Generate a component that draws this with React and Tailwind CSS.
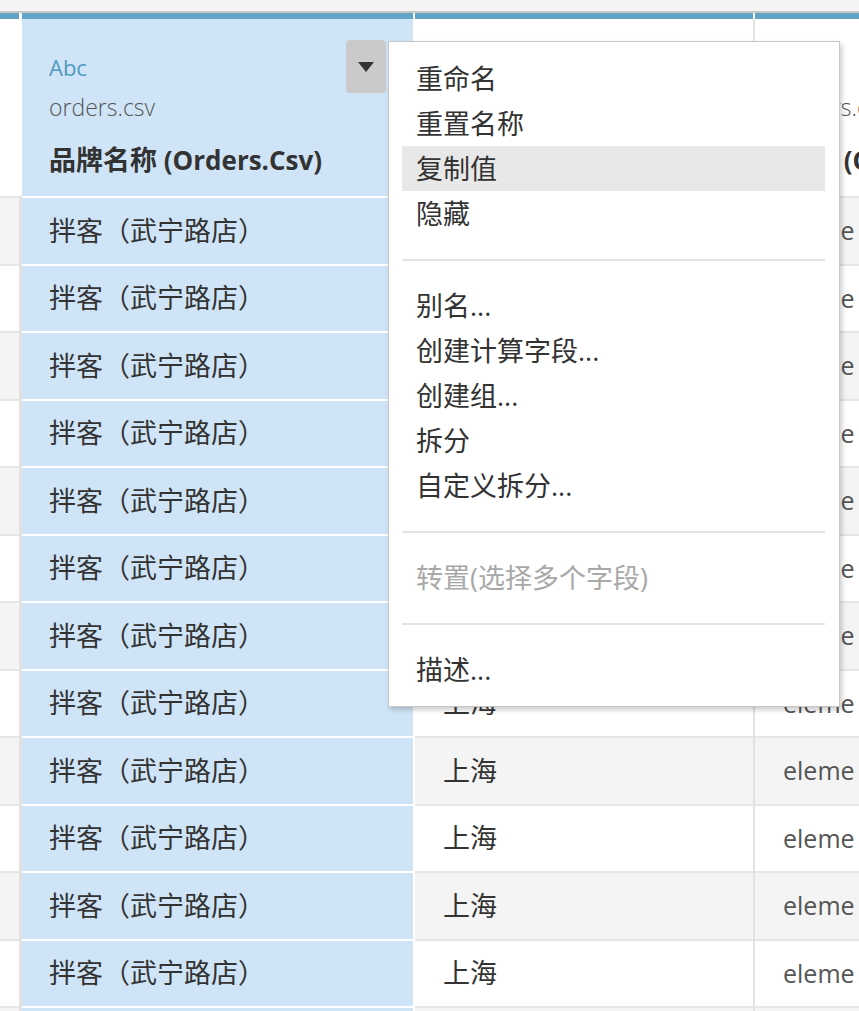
import React from 'react';

const font = { fontFamily: '"Open Sans", "Noto Sans CJK SC", sans-serif' };

const rows = Array.from({ length: 13 }, (_, i) => i);

const menuGroups = [
  [
    { label: '重命名' },
    { label: '重置名称' },
    { label: '复制值', active: true },
    { label: '隐藏' },
  ],
  [
    { label: '别名...' },
    { label: '创建计算字段...' },
    { label: '创建组...' },
    { label: '拆分' },
    { label: '自定义拆分...' },
  ],
  [{ label: '转置(选择多个字段)', disabled: true }],
  [{ label: '描述...' }],
];

const HeaderText = ({ title }) => (
  <div className="pt-[28px] whitespace-nowrap">
    <div className="h-10 leading-10 text-[22px] font-medium text-[#4e9bc0]">Abc</div>
    <div className="h-10 leading-10 text-[23px] font-light text-[#555]">orders.csv</div>
    <div className="mt-[13px] h-10 leading-10 font-bold text-[#333]">
      <span className="text-[27px]">{title}</span>
      <span className="text-[26px]"> (Orders.Csv)</span>
    </div>
  </div>
);

const Divider = ({ color, width }) => (
  <div className={`flex flex-col shrink-0 ${width}`}>
    <div className="h-[6px] bg-white" />
    <div className={`flex-1 ${color}`} />
  </div>
);

const Column = ({ width, selected, header, cell }) => (
  <div className={`flex flex-col shrink-0 ${width}`}>
    <div className="h-[6px] bg-[#62a4c8]" />
    <div className={`relative h-[177px] ${selected ? 'bg-[#cfe5f7] px-[27px]' : 'bg-white px-[28px]'}`}>
      {header}
    </div>
    {rows.map((i) => (
      <div
        key={i}
        className={`h-[67.5px] border-t-2 flex items-center overflow-hidden whitespace-nowrap ${
          selected
            ? 'bg-[#cfe5f7] border-white px-[27px]'
            : i % 2 === 0
            ? 'bg-[#f4f4f4] border-[#e6e6e6] px-[28px]'
            : 'bg-white border-[#e6e6e6] px-[28px]'
        }`}
      >
        {cell}
      </div>
    ))}
  </div>
);

export default function App() {
  return (
    <div className="relative w-[859px] h-[1011px] overflow-hidden bg-white" style={font}>
      <div className="h-[11px] bg-[#f4f4f4]" />
      <div className="h-[2px] bg-[#c8c8c8]" />
      <div className="flex">
        <Column width="w-[19px]" cell={null} />
        <Divider color="bg-[#e2e2e2]" width="w-[3px]" />
        <Column
          width="w-[391px]"
          selected
          header={
            <>
              <HeaderText title="品牌名称" />
              <button className="absolute right-[27px] top-[21px] w-10 h-[53px] rounded bg-[#cacaca] flex items-center justify-center">
                <svg width="16" height="10" viewBox="0 0 16 10">
                  <path d="M0 0h16L8 10z" fill="#333" />
                </svg>
              </button>
            </>
          }
          cell={<span className="text-[27px] text-[#333]">拌客（武宁路店）</span>}
        />
        <div className="w-[2px] shrink-0 bg-white" />
        <Column
          width="w-[338px]"
          header={<HeaderText title="城市" />}
          cell={<span className="text-[27px] text-[#333]">上海</span>}
        />
        <Divider color="bg-[#e2e2e2]" width="w-[2px]" />
        <Column
          width="w-[200px]"
          header={<HeaderText title="平台" />}
          cell={<span className="text-[25px] text-[#555]">eleme</span>}
        />
      </div>

      <div className="absolute left-[388px] top-[41px] w-[452px] bg-white border border-[#c6c6c6] shadow-[2px_3px_5px_rgba(0,0,0,0.2)] pt-[14px] pb-[14px] pl-[13px] pr-[14px]">
        {menuGroups.map((group, gi) => (
          <div key={gi}>
            {gi > 0 && <div className="mt-[23px] mb-[22px] h-[2px] bg-[#e3e3e3]" />}
            {group.map((item) => (
              <div
                key={item.label}
                className={`h-[45px] leading-[45px] px-[14px] text-[27px] whitespace-nowrap ${
                  item.active ? 'bg-[#e8e8e8]' : ''
                } ${item.disabled ? 'text-[#a8a8a8]' : 'text-[#333]'}`}
              >
                {item.label}
              </div>
            ))}
          </div>
        ))}
      </div>
    </div>
  );
}
